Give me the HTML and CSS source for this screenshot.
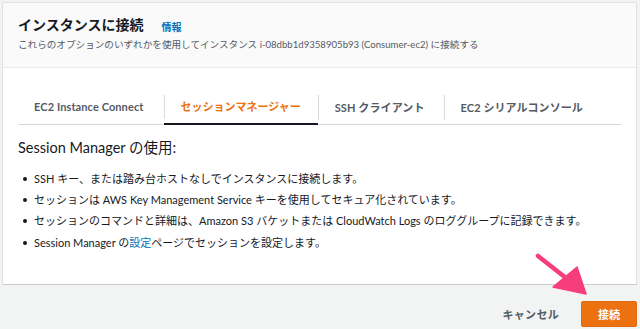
FILE: index.html
```html
<!DOCTYPE html>
<html lang="ja">
<head>
  <meta charset="UTF-8" />
  <title>インスタンスに接続</title>
  <link rel="stylesheet" href="styles.css">
</head>
<body>
<div class="page">
  <div class="card">
    <div class="card-header">
      <div class="title-row">
        <h1 class="title">インスタンスに接続</h1>
        <a class="info-link">情報</a>
      </div>
      <div class="subtitle">これらのオプションのいずれかを使用してインスタンス i-08dbb1d9358905b93 (Consumer-ec2) に接続する</div>
    </div>

    <div class="card-body">
      <!-- === TABS === -->
      <div class="tabs">
        <div class="tab">EC2 Instance Connect</div>
        <div class="tab active">セッションマネージャー</div>
        <div class="tab">SSH クライアント</div>
        <div class="tab">EC2 シリアルコンソール</div>
      </div>

      <h2 class="section-title">Session Manager の使用:</h2>
      <ul class="features">
        <li>SSH キー、または踏み台ホストなしでインスタンスに接続します。</li>
        <li>セッションは AWS Key Management Service キーを使用してセキュア化されています。</li>
        <li>セッションのコマンドと詳細は、Amazon S3 バケットまたは CloudWatch Logs のロググループに記録できます。</li>
        <li>Session Manager の<a class="link">設定</a>ページでセッションを設定します。</li>
      </ul>
    </div>
  </div>

  <div class="actions">
    <button class="btn-cancel">キャンセル</button>
    <button class="btn-primary">接続</button>
  </div>
</div>

<svg class="arrow" width="60" height="52" viewBox="0 0 60 52">
  <path d="M4 6 L32 28" stroke="#f73e7c" stroke-width="4.5" stroke-linecap="round" fill="none"/>
  <polygon points="19,37 43,17 52,44" fill="#f73e7c" stroke="#f73e7c" stroke-width="1.5" stroke-linejoin="round"/>
</svg>
</body>
</html>
```

FILE: styles.css
```css
* {
  box-sizing: border-box;
}

body {
  margin: 0;
  background-color: #f2f3f3;
  font-family: Lato, 'Noto Sans CJK JP', sans-serif;
  color: #16191f;
  width: 640px;
  height: 329px;
  overflow: hidden;
  position: relative;
}

.page {
  padding: 2px 3px 0 2px;
}

/* ===== Card ===== */
.card {
  background-color: #ffffff;
  border: 1px solid #dfe3e3;
  border-bottom: 1px solid #c8cccc;
  height: 283px;
}

.card-header {
  background-color: #fafafa;
  border-bottom: 1px solid #eaeded;
  height: 65px;
  padding: 10px 16px 0 15px;
}

.title-row {
  display: flex;
  align-items: center;
  gap: 18px;
}

.title {
  margin: 0;
  font-size: 14px;
  font-weight: bold;
  line-height: 24px;
}

.info-link {
  color: #0073bb;
  font-size: 10px;
  font-weight: bold;
  margin-top: 2px;
}

.subtitle {
  font-size: 9.6px;
  color: #545b64;
  line-height: 16px;
  margin-top: 0;
}

.card-body {
  padding: 21px 15px 0 15px;
}

/* ===== Tabs ===== */
.tabs {
  display: flex;
  border-bottom: 1px solid #d5dbdb;
  height: 36px;
}

.tab {
  height: 35px;
  display: flex;
  align-items: center;
  padding: 0 17px;
  font-size: 11px;
  font-weight: bold;
  color: #545b64;
  position: relative;
  white-space: nowrap;
  flex-shrink: 0;
}

.tab + .tab::before {
  content: "";
  position: absolute;
  left: 0;
  top: 6px;
  bottom: 4px;
  border-left: 1px solid #d5dbdb;
}

.tab:first-child {
  padding-left: 16px;
  padding-right: 20px;
  letter-spacing: 0.1px;
}

.tab:nth-child(3) {
  padding-right: 19px;
  letter-spacing: 0.1px;
}

.tab:last-child {
  letter-spacing: 0.1px;
}

.tab.active {
  color: #ec7211;
  border-bottom: 2px solid #16191f;
  margin-bottom: -1px;
  height: 36px;
}

.section-title {
  margin: 12px 0 0 0;
  font-size: 14.5px;
  font-weight: normal;
  line-height: 22px;
}

.features {
  list-style: none;
  margin: 9px 0 0 0;
  padding: 0;
}

.features li {
  font-size: 11px;
  line-height: 21px;
  color: #16191f;
  position: relative;
  padding-left: 16px;
}

.features li:last-child {
  margin-top: 1px;
}

.features li::before {
  content: "";
  position: absolute;
  left: 5px;
  top: 9px;
  width: 4px;
  height: 4px;
  border-radius: 50%;
  background-color: #16191f;
}

.link {
  color: #0073bb;
}

/* ===== Actions ===== */
.actions {
  display: flex;
  justify-content: flex-end;
  align-items: center;
  gap: 12px;
  margin-top: 16px;
}

.btn-cancel {
  background: none;
  border: none;
  font-family: inherit;
  font-size: 11px;
  font-weight: bold;
  color: #545b64;
  padding: 0 10px;
  letter-spacing: 0.3px;
}

.btn-primary {
  width: 56px;
  height: 26px;
  background-color: #ec7211;
  border: 1px solid #e36a0b;
  color: #ffffff;
  font-family: inherit;
  font-size: 11px;
  font-weight: bold;
  border-radius: 2px;
}

.arrow {
  position: absolute;
  left: 534px;
  top: 250px;
}
```
